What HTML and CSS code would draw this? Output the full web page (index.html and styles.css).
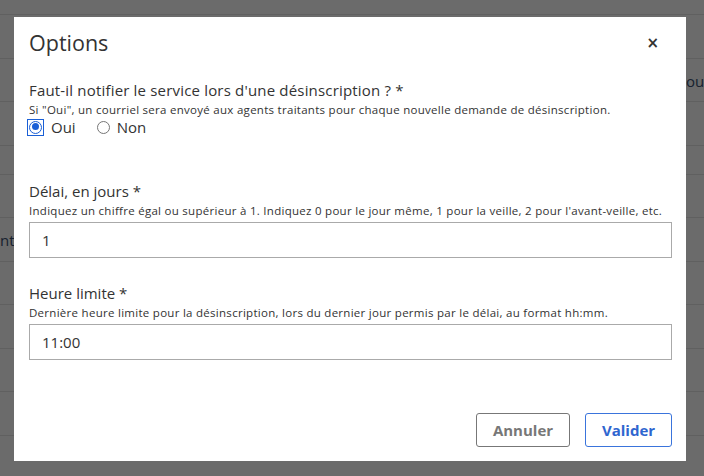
FILE: index.html
```html
<!DOCTYPE html>
<html lang="fr">
<head>
<meta charset="utf-8">
<title>Options</title>
<link rel="stylesheet" href="styles.css">
</head>
<body>
<div class="page">
  <div class="row row-top"></div>
  <div class="row"></div>
  <div class="row"><span class="cell-right">ou</span></div>
  <div class="row"></div>
  <div class="row row-short"></div>
  <div class="row"></div>
  <div class="row"><span class="cell-left">nt</span></div>
  <div class="row"></div>
  <div class="row"></div>
  <div class="row"></div>
  <div class="row row-last"><span class="cell-aucun">Aucun</span></div>
</div>
<div class="overlay"></div>
<div class="modal">
  <div class="modal-header">
    <h1 class="modal-title">Options</h1>
    <button class="close" type="button">×</button>
  </div>
  <div class="modal-body">
    <div class="field field-radio">
      <div class="label label-long">Faut-il notifier le service lors d'une désinscription ? *</div>
      <div class="help">Si "Oui", un courriel sera envoyé aux agents traitants pour chaque nouvelle demande de désinscription.</div>
      <div class="radios">
        <label class="radio-opt"><span class="focus-ring"><span class="radio checked"></span></span>Oui</label>
        <label class="radio-opt"><span class="radio"></span>Non</label>
      </div>
    </div>
    <div class="field">
      <div class="label">Délai, en jours *</div>
      <div class="help">Indiquez un chiffre égal ou supérieur à 1. Indiquez 0 pour le jour même, 1 pour la veille, 2 pour l'avant-veille, etc.</div>
      <input class="input" type="text" value="1">
    </div>
    <div class="field">
      <div class="label">Heure limite *</div>
      <div class="help">Dernière heure limite pour la désinscription, lors du dernier jour permis par le délai, au format hh:mm.</div>
      <input class="input" type="text" value="11:00">
    </div>
  </div>
  <div class="modal-footer">
    <button class="btn btn-cancel" type="button">Annuler</button>
    <button class="btn btn-ok" type="button">Valider</button>
  </div>
</div>
</body>
</html>
```
FILE: styles.css
```css
* { box-sizing: border-box; }
html, body { margin: 0; padding: 0; }
body {
  font-family: "Open Sans", "Liberation Sans", sans-serif;
  background: #fff;
  color: #333;
  width: 704px;
  height: 476px;
  overflow: hidden;
}
.page {
  display: flex;
  flex-direction: column;
}
.row {
  height: 43.5px;
  border-bottom: 1px solid #e4e4e4;
  position: relative;
  font-size: 15px;
  color: #3a5070;
}
.row-top { height: 15px; }
.row-short { height: 29px; }
.cell-right { position: absolute; left: 686px; top: 12px; }
.cell-left { position: absolute; left: 0; top: 12px; }
.cell-aucun {
  position: absolute; left: 255px; top: 9px;
  padding-right: 8px; border-right: 1px solid #ddd;
}
.overlay {
  position: fixed;
  inset: 0;
  background: rgba(0, 0, 0, 0.58);
}
.modal {
  position: absolute;
  left: 14px;
  top: 17px;
  width: 672px;
  background: #fff;
}
.modal-header {
  display: flex;
  align-items: flex-start;
  justify-content: space-between;
  padding: 11px 27px 0 15px;
  height: 63px;
}
.modal-title {
  margin: 0;
  font-size: 21.5px;
  font-weight: 400;
  line-height: 30px;
  color: #333;
}
.close {
  border: 0;
  background: none;
  padding: 0;
  margin-top: 5px;
  font-family: "DejaVu Sans", sans-serif;
  font-weight: bold;
  font-size: 15px;
  line-height: 20px;
  color: #333;
}
.modal-body {
  padding: 0 14px 0 15px;
}
.field { margin-bottom: 25px; }
.field-radio { margin-bottom: 44px; }
.label {
  font-size: 15px;
  line-height: 20px;
}
.label-long { letter-spacing: 0.18px; }
.help {
  font-size: 11.5px;
  line-height: 19px;
  letter-spacing: 0.28px;
}
.input {
  display: block;
  width: 100%;
  height: 36px;
  margin-top: 2px;
  border: 1px solid #aaa;
  padding: 0 12px;
  font-family: "Open Sans", "Liberation Sans", sans-serif;
  font-size: 15px;
  color: #333;
  outline: none;
}
.radios {
  display: flex;
  gap: 21px;
  font-size: 15px;
  line-height: 20px;
  margin-top: -2px;
}
.radio-opt {
  display: flex;
  align-items: center;
  gap: 7px;
}
.focus-ring {
  display: flex;
  padding: 1px;
  border: 1px solid #1a5fd6;
  margin-left: -2px;
}
.radio {
  width: 13px;
  height: 13px;
  border: 1px solid #767676;
  border-radius: 50%;
  position: relative;
}
.radio.checked {
  border: 1.5px solid #1a5fd6;
}
.radio.checked::after {
  content: "";
  position: absolute;
  left: 1.5px; top: 1.5px;
  width: 7px; height: 7px;
  border-radius: 50%;
  background: #1a5fd6;
}
.modal-footer {
  display: flex;
  justify-content: flex-end;
  gap: 15px;
  padding: 28px 14px 14px;
}
.btn {
  height: 34px;
  border-radius: 3px;
  background: #fff;
  font-family: "Open Sans", "Liberation Sans", sans-serif;
  font-weight: 700;
  font-size: 15px;
  padding: 0;
}
.btn-cancel {
  width: 94px;
  border: 1px solid #777;
  color: #777;
}
.btn-ok {
  width: 87px;
  border: 1px solid #3a74dc;
  color: #2f66cf;
}
```
